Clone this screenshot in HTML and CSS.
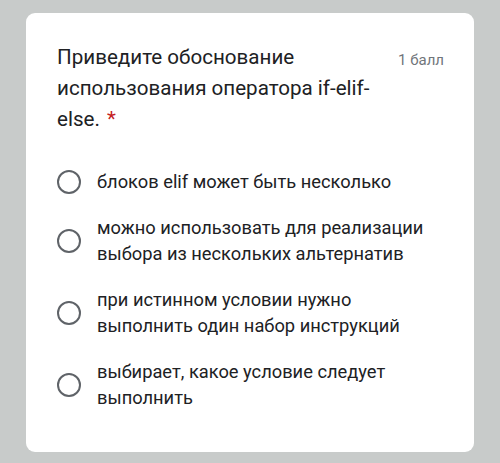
FILE: index.html
```html
<!DOCTYPE html>
<html lang="ru">
<head>
  <meta charset="UTF-8">
  <meta name="viewport" content="width=device-width, initial-scale=1.0">
  <title>Вопрос</title>
  <link rel="stylesheet" href="styles.css">
</head>
<body>
  <div class="card">
    <div class="question-head">
      <div class="question-title">Приведите обоснование использования оператора if-elif-else. <span class="required">*</span></div>
      <div class="points">1 балл</div>
    </div>

    <div class="options">
      <label class="option">
        <span class="radio"></span>
        <span class="option-text">блоков elif может быть несколько</span>
      </label>
      <label class="option">
        <span class="radio"></span>
        <span class="option-text">можно использовать для реализации выбора из нескольких альтернатив</span>
      </label>
      <label class="option">
        <span class="radio"></span>
        <span class="option-text">при истинном условии нужно выполнить один набор инструкций</span>
      </label>
      <label class="option">
        <span class="radio"></span>
        <span class="option-text">выбирает, какое условие следует выполнить</span>
      </label>
    </div>
  </div>
</body>
</html>
```

FILE: styles.css
```css
html, body {
  height: 100%;
}

body {
  margin: 0;
  padding: 13px 26px 11px 26px;
  box-sizing: border-box;
  background: #c8cbca;
  font-family: Roboto, "Noto Sans", sans-serif;
  color: #202124;
}

.card {
  background: #fff;
  border-radius: 9px;
  height: 100%;
  box-sizing: border-box;
  padding: 29px 30px 0 31px;
}

.question-head {
  display: flex;
  justify-content: space-between;
  align-items: flex-start;
}

.question-title {
  width: 322px;
  font-size: 20.6px;
  line-height: 31px;
}

.required {
  color: #c5221f;
  margin-left: 2px;
}

.points {
  font-size: 15px;
  color: #70757a;
  padding-top: 9px;
}

.options {
  margin-top: 34px;
  display: flex;
  flex-direction: column;
  gap: 20px;
}

.option {
  display: flex;
  align-items: center;
  gap: 16px;
}

.radio {
  flex: none;
  width: 20px;
  height: 20px;
  border: 2.5px solid #5f6368;
  border-radius: 50%;
}

.option-text {
  font-size: 18.3px;
  line-height: 26px;
  width: 340px;
}
```
